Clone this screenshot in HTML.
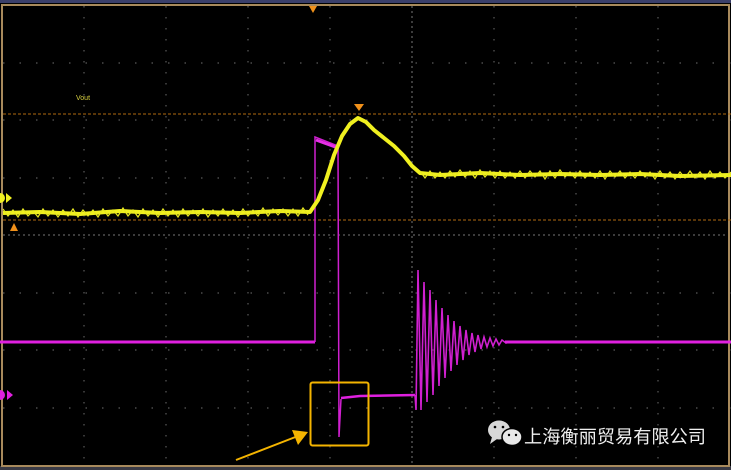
<!DOCTYPE html>
<html><head><meta charset="utf-8"><style>
html,body{margin:0;padding:0;background:#000;width:731px;height:470px;overflow:hidden}
svg{display:block}
</style></head><body>
<svg width="731" height="470" viewBox="0 0 731 470" xmlns="http://www.w3.org/2000/svg">
<rect width="731" height="470" fill="#000"/>
<rect x="0" y="0" width="731" height="3" fill="#3a3f6a"/>
<rect x="0" y="466" width="731" height="4" fill="#3a3a44"/>
<g stroke="#5a5a5a" stroke-width="1.2" stroke-dasharray="1.5 9.5">
<line x1="84" y1="6" x2="84" y2="465"/><line x1="166" y1="6" x2="166" y2="465"/>
<line x1="248" y1="6" x2="248" y2="465"/><line x1="330" y1="6" x2="330" y2="465"/>
<line x1="494" y1="6" x2="494" y2="465"/><line x1="576" y1="6" x2="576" y2="465"/>
<line x1="658" y1="6" x2="658" y2="465"/>
</g>
<g stroke="#5a5a5a" stroke-width="1.2" stroke-dasharray="1.5 15">
<line x1="3" y1="63" x2="731" y2="63"/><line x1="3" y1="120" x2="731" y2="120"/>
<line x1="3" y1="178" x2="731" y2="178"/><line x1="3" y1="293" x2="731" y2="293"/>
<line x1="3" y1="350" x2="731" y2="350"/><line x1="3" y1="408" x2="731" y2="408"/>
</g>
<line x1="412" y1="6" x2="412" y2="465" stroke="#777" stroke-width="1" stroke-dasharray="2 3"/>
<line x1="3" y1="235" x2="731" y2="235" stroke="#777" stroke-width="1" stroke-dasharray="2 3"/>
<rect x="2" y="5" width="727" height="461" fill="none" stroke="#a88a5c" stroke-width="2"/>
<line x1="3" y1="114" x2="731" y2="114" stroke="#b06a10" stroke-width="1" stroke-dasharray="3 2"/>
<line x1="3" y1="220" x2="731" y2="220" stroke="#b06a10" stroke-width="1" stroke-dasharray="3 2"/>
<polygon points="309,6 317,6 313,13" fill="#f0901a"/>
<polygon points="354,104 364,104 359,111" fill="#f0901a"/>
<polygon points="10,231 18,231 14,223" fill="#f0901a"/>
<text x="76" y="100" font-family="Liberation Sans,sans-serif" font-size="7" fill="#d8d040">Vout</text>
<polyline fill="none" stroke="#e020e0" stroke-width="3" points="0,342 315,342"/>
<polyline fill="none" stroke="#d020d0" stroke-width="1.5" points="315,342 315,137 338,146 339,437 341,399"/>
<polyline fill="none" stroke="#e830e8" stroke-width="3" points="316,140 338,148"/>
<polyline fill="none" stroke="#e020e0" stroke-width="2.5" points="341,398 360,396 415,395"/>
<polyline fill="none" stroke="#d020d0" stroke-width="1.6" points="415,395 416,410 418,270 421,410 424,282 427,402 430,290 433,395 436,300 439,386 442,308 445,378 448,315 451,371 454,321 457,365 460,326 463,360 466,330 469,355 472,333 475,352 478,335 481,349 484,337 487,347 490,338 493,346 496,339 499,345 502,340 506,343 510,342"/>
<polyline fill="none" stroke="#e020e0" stroke-width="3" points="505,342 731,342"/>
<polygon points="7,390 13,395 7,400" fill="#e020e0"/>
<circle cx="0" cy="395" r="5" fill="#e020e0"/>
<polyline fill="none" stroke="#f0f020" stroke-width="4" stroke-linejoin="round" points="3,213 40,212 80,214 120,211 160,213 200,212 240,213 280,211 310,212 318,200 326,180 334,155 342,136 350,124 358,118 366,122 374,130 384,138 394,146 404,156 412,166 420,173 440,175 480,173 520,175 560,174 600,175 640,174 680,176 731,175"/>
<polyline fill="none" stroke="#e8e820" stroke-width="1.2" points="3,209 8,216 13,210 18,217 23,209 28,216 33,211 38,217 43,209 48,216 53,210 58,217 63,210 68,216 73,209 78,217 83,210 88,216 93,210 98,217 103,209 108,216 113,210 118,216 123,208 128,216 133,210 138,217 143,209 148,216 153,210 158,217 163,209 168,216 173,210 178,217 183,209 188,216 193,210 198,216 203,209 208,217 213,210 218,216 223,209 228,216 233,210 238,217 243,209 248,216 253,210 258,216 263,208 268,216 273,209 278,215 283,209 288,216 293,209 298,216 303,208 308,215"/>
<polyline fill="none" stroke="#e8e820" stroke-width="1.2" points="420,171 425,178 430,171 435,178 440,172 445,178 450,171 455,177 460,170 465,177 470,171 475,178 480,170 485,177 490,171 495,178 500,171 505,178 510,172 515,178 520,171 525,178 530,171 535,177 540,171 545,179 550,171 555,178 560,170 565,177 570,172 575,178 580,171 585,178 590,172 595,178 600,171 605,179 610,171 615,177 620,171 625,178 630,172 635,178 640,171 645,177 650,172 655,179 660,171 665,178 670,172 675,179 680,172 685,178 690,171 695,178 700,172 705,179 710,171 715,178 720,172 725,178 731,172"/>
<polygon points="6,193 12,198 6,203" fill="#f0f020"/>
<circle cx="0" cy="198" r="5" fill="#f0f020"/>
<rect x="310.5" y="382.5" width="58" height="63" rx="2" fill="none" stroke="#f4b400" stroke-width="2"/>
<line x1="236" y1="460" x2="298" y2="436" stroke="#f4b400" stroke-width="2"/>
<polygon points="308,432 292,430 298,445" fill="#f4b400"/>
<ellipse cx="499" cy="430" rx="11" ry="9.5" fill="#d8d8d8"/>
<polygon points="492,437 490,444 497,439" fill="#d8d8d8"/>
<ellipse cx="512" cy="437" rx="10" ry="8.5" fill="#e8e8e8" stroke="#000" stroke-width="1.5"/>
<circle cx="495" cy="427" r="1.3" fill="#000"/><circle cx="503" cy="427" r="1.3" fill="#000"/>
<circle cx="509" cy="435" r="1.2" fill="#000"/><circle cx="516" cy="435" r="1.2" fill="#000"/>
<text x="524" y="443" font-family="Liberation Sans,'Noto Sans CJK SC',sans-serif" font-size="18" fill="#f0f0f0" textLength="182" lengthAdjust="spacingAndGlyphs">上海衡丽贸易有限公司</text>
</svg>
</body></html>
